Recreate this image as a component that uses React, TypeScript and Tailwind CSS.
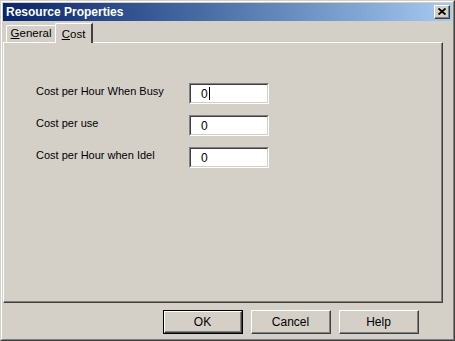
import React from "react";

const font = { fontFamily: '"Liberation Sans", Arial, sans-serif' };

function Raised({ children, className = "" }: { children?: React.ReactNode; className?: string }) {
  return (
    <div className={`border-t border-l border-white border-r border-b border-r-[#404040] border-b-[#404040] ${className}`}>
      <div className="h-full w-full border-r border-b border-[#808080] flex items-center justify-center">
        {children}
      </div>
    </div>
  );
}

function Field({ value, cursor }: { value: string; cursor?: boolean }) {
  return (
    <div className="w-[80px] h-[21px] border-t border-l border-[#808080] border-r border-b border-r-white border-b-white">
      <div className="h-full w-full border-t border-l border-[#404040] border-r border-b border-r-[#d4d0c8] border-b-[#d4d0c8] bg-white flex items-center pl-[10px]">
        <span className="text-[12px] text-black leading-none">{value}</span>
        {cursor && <span className="w-px h-[13px] bg-black ml-px" />}
      </div>
    </div>
  );
}

export default function App() {
  return (
    <div className="w-[455px] h-[341px] bg-[#d4d0c8] select-none" style={font}>
      <div className="w-full h-full border-t border-l border-[#d4d0c8] border-r border-b border-r-[#404040] border-b-[#404040]">
        <div className="w-full h-full border-t border-l border-white border-r border-b border-r-[#808080] border-b-[#808080] flex flex-col pt-px pl-px pr-px">
          {/* Title bar */}
          <div className="h-[18px] flex items-center justify-between bg-gradient-to-r from-[#0a246a] to-[#a6caf0] pl-[3px] pr-[2px]">
            <span className="text-white font-bold text-[12px] leading-none">
              Resource Properties
            </span>
            <Raised className="w-[16px] h-[14px] bg-[#d4d0c8]">
              <svg width="8" height="7" viewBox="0 0 8 7">
                <path d="M0.5 0.5 L7.5 6.5 M7.5 0.5 L0.5 6.5" stroke="black" strokeWidth="1.8" />
              </svg>
            </Raised>
          </div>

          {/* Tabs */}
          <div className="flex items-end h-[20px] mt-px pl-[2px]">
            <div className="w-[50px] h-[17px] border-t border-l border-white border-r border-r-[#808080] rounded-tl-[2px] flex items-center justify-center text-[11.5px] text-black ml-px">
              <span><span className="underline">G</span>eneral</span>
            </div>
            <div className="w-[38px] h-[20px] -mb-px border-t border-l border-white border-r-2 border-r-[#404040] rounded-tl-[2px] flex items-start pt-[2px] justify-center text-[11.5px] text-black bg-[#d4d0c8] relative z-10 -ml-px">
              <span><span className="underline">C</span>ost</span>
            </div>
          </div>

          {/* Panel */}
          <div className="w-[440px] h-[261px] border-t border-l border-white border-r border-b border-r-[#404040] border-b-[#404040]">
            <div className="w-full h-full border-r border-b border-[#808080] pt-[40px] pl-[32px]">
              <div className="grid grid-cols-[153px_80px] gap-y-[11px] text-[11px] text-black">
                <div className="h-[21px] flex items-start">Cost per Hour When Busy</div>
                <Field value="0" cursor />
                <div className="h-[21px] flex items-start">Cost per use</div>
                <Field value="0" />
                <div className="h-[21px] flex items-start">Cost per Hour when Idel</div>
                <Field value="0" />
              </div>
            </div>
          </div>

          {/* Buttons */}
          <div className="flex pl-[160px] gap-[8px] mt-[7px] text-[12px] text-black">
            <div className="border border-black">
              <Raised className="w-[78px] h-[22px]">OK</Raised>
            </div>
            <Raised className="w-[80px] h-[24px]">Cancel</Raised>
            <Raised className="w-[80px] h-[24px]">Help</Raised>
          </div>
        </div>
      </div>
    </div>
  );
}
